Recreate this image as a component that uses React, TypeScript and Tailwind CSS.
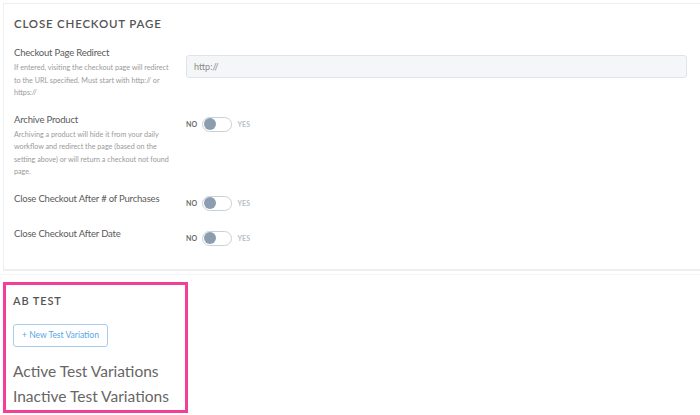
const font = { fontFamily: "Lato, 'Open Sans', sans-serif" };

function Toggle() {
  return (
    <div className="flex items-center gap-[5px]">
      <span className="text-[7px] font-bold tracking-wide text-[#6b6b6b]">NO</span>
      <span className="flex h-[15px] w-[30px] items-center rounded-full border border-[#c9d0d8] bg-white px-[1px]">
        <span className="h-[12px] w-[12px] rounded-full bg-[#8c9db0]" />
      </span>
      <span className="text-[7px] font-bold tracking-wide text-[#b8bec6]">YES</span>
    </div>
  );
}

const rows = [
  {
    label: "Checkout Page Redirect",
    desc: [
      "If entered, visiting the checkout page will redirect",
      "to the URL specified. Must start with http:// or",
      "https://",
    ],
    input: true,
  },
  {
    label: "Archive Product",
    desc: [
      "Archiving a product will hide it from your daily",
      "workflow and redirect the page (based on the",
      "setting above) or will return a checkout not found",
      "page.",
    ],
  },
  { label: "Close Checkout After # of Purchases", tall: true },
  { label: "Close Checkout After Date" },
];

export default function App() {
  return (
    <div className="h-[415px] w-[700px] overflow-hidden bg-white text-[#4d4d4d]" style={font}>
      <div className="ml-[3px] mt-[3px] border-l border-t border-[#efefef]">
        <section className="h-[267px] border-b-2 border-[#eeeeee] pl-[10px]">
          <h2 className="pt-[13px] text-[11.5px] font-semibold leading-[14px] tracking-[0.07em] text-[#555]">
            CLOSE CHECKOUT PAGE
          </h2>
          <div className="mt-[15px] flex flex-col gap-[13px]">
            {rows.map((row) => (
              <div
                className={row.tall ? "grid min-h-[22px] grid-cols-[172px_1fr]" : "grid grid-cols-[172px_1fr]"}
                key={row.label}
              >
                <div>
                  <p className="whitespace-nowrap text-[9.5px] leading-[14px] tracking-[-0.02em] text-[#5a5a5a]">
                    {row.label}
                  </p>
                  {row.desc && (
                    <div className="mt-[2px] text-[7.2px] leading-[12.5px] text-[#9a9a9a]">
                      {row.desc.map((line) => (
                        <p className="whitespace-nowrap" key={line}>
                          {line}
                        </p>
                      ))}
                    </div>
                  )}
                </div>
                <div className={row.input ? "pt-[9px] pr-[13px]" : "pt-[4px]"}>
                  {row.input ? (
                    <div className="flex h-[23px] items-center rounded-[3px] border border-[#dde4ec] bg-[#f4f6f8] px-[7px] text-[9px] text-[#8a8a8a]">
                      http://
                    </div>
                  ) : (
                    <Toggle />
                  )}
                </div>
              </div>
            ))}
          </div>
        </section>
      </div>
      <div className="mt-[3px] border-t border-[#f4f4f4]" />
      <div className="border-b border-dotted border-[#e2e2e2] pb-[2px]">
        <section className="ml-[3px] mt-[7px] h-[131px] w-[185px] border-[3px] border-[#f43f9a] px-[7px] pt-[9px]">
          <h2 className="text-[11px] font-semibold leading-[14px] tracking-[0.08em] text-[#555]">AB TEST</h2>
          <button className="mt-[16px] flex h-[23px] w-[95px] items-center justify-center rounded-[3px] border border-[#a9cdf0] text-[8.5px] text-[#5aa6e6]">
            + New Test Variation
          </button>
          <p className="mt-[12px] text-[15.5px] leading-[25px] text-[#666]">Active Test Variations</p>
          <p className="text-[15.5px] leading-[25px] text-[#666]">Inactive Test Variations</p>
        </section>
      </div>
    </div>
  );
}
